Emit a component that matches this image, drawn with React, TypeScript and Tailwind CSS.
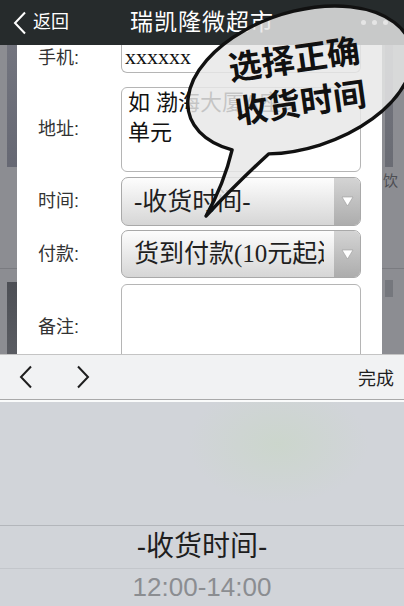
// Order form with a "choose the delivery time" callout over it

const UI = "font-['Liberation_Sans','Noto_Sans_CJK_SC',sans-serif]";
const VALUE = "font-['Liberation_Serif','Noto_Sans_CJK_SC',serif]";

function Chevron({ dir, className }: { dir: "left" | "right"; className?: string }) {
  return (
    <svg width="14" height="24" viewBox="0 0 14 24" className={className}>
      <polyline
        points={dir === "left" ? "12,1.5 2,12 12,22.5" : "2,1.5 12,12 2,22.5"}
        fill="none"
        stroke="currentColor"
        strokeWidth="2"
        strokeLinejoin="miter"
      />
    </svg>
  );
}

function SelectBox({ value }: { value: string }) {
  return (
    <div className="flex h-full rounded-[7px] border border-[#a9a9a9] bg-gradient-to-b from-[#fdfdfd] to-[#d6d6d6] overflow-hidden">
      <div className={`flex-1 min-w-0 flex items-center pl-[12px] pr-[10px] text-[25px] text-[#1f1f1f] ${VALUE}`}>
        <span className="block overflow-hidden whitespace-nowrap">{value}</span>
      </div>
      <div className="w-[26px] flex items-center justify-center bg-gradient-to-b from-[#d4d4d4] to-[#adadad]">
        <svg width="13" height="11" viewBox="0 0 13 11">
          <polygon points="1,1 12,1 6.5,10" fill="#fff" stroke="#9a9a9a" strokeWidth="0.6" />
        </svg>
      </div>
    </div>
  );
}

function Label({ children }: { children: string }) {
  return <div className="flex items-center pb-[3px] text-[18px] text-[#333]">{children}</div>;
}

export default function App() {
  return (
    <div className={`relative w-[404px] h-[606px] overflow-hidden flex flex-col bg-[#8c8d92] ${UI}`}>
      {/* top bar */}
      <header className="h-[45px] grid grid-cols-[1fr_auto_1fr] items-center bg-[#262b2c] text-white">
        <div className="flex items-center pl-[13px] gap-[6px]">
          <Chevron dir="left" className="text-white" />
          <span className="text-[18px]">返回</span>
        </div>
        <div className="text-[23px] tracking-[1px]">瑞凯隆微超市</div>
        <div className="flex justify-end items-center gap-[6px] pr-[16px]">
          <span className="w-[5px] h-[5px] rounded-full bg-[#d8d8d8]" />
          <span className="w-[5px] h-[5px] rounded-full bg-[#d8d8d8]" />
          <span className="w-[5px] h-[5px] rounded-full bg-[#d8d8d8]" />
        </div>
      </header>

      {/* page behind + modal form */}
      <div className="h-[309px] flex">
        <div className="w-[17px] flex flex-col">
          <div className="h-[223px] flex">
            <div className="w-[7px]" />
            <div className="w-[10px] flex flex-col">
              <div className="h-[122px] bg-gradient-to-b from-[#73757f] to-[#666873]" />
            </div>
          </div>
          <div className="flex-1 flex border-t border-[#7a7b80]">
            <div className="w-[7px]" />
            <div className="w-[10px] flex flex-col">
              <div className="h-[13px]" />
              <div className="flex-1 bg-gradient-to-b from-[#4d4f55] to-[#5a5c62]" />
            </div>
          </div>
        </div>

        <div className="w-[365px] bg-white overflow-hidden pl-[21px] grid grid-cols-[83px_240px] content-start">
          <Label>手机:</Label>
          <div className={`h-[28px] flex items-center pl-[3px] pb-[4px] border border-t-0 border-[#b5b5b5] rounded-b-[6px] text-[22px] text-[#111] ${VALUE}`}>
            xxxxxx
          </div>

          <div className="mt-[12px] flex items-center text-[18px] text-[#333]">地址:</div>
          <div className="mt-[12px] h-[85px] border border-[#b5b5b5] rounded-[6px] px-[6px] text-[22px] leading-[30px] text-[#111]">
            <div>如 渤海大厦A座3</div>
            <div>单元</div>
          </div>

          <div className="mt-[5px] flex items-center text-[18px] text-[#333]">时间:</div>
          <div className="mt-[5px] h-[49px]">
            <SelectBox value="-收货时间-" />
          </div>

          <div className="mt-[4px] flex items-center text-[18px] text-[#333]">付款:</div>
          <div className="mt-[4px] h-[48px]">
            <SelectBox value="货到付款(10元起送)" />
          </div>

          <div className="mt-[6px] flex items-center pb-[4px] text-[18px] text-[#333]">备注:</div>
          <div className="mt-[6px] h-[90px] border border-[#b5b5b5] rounded-[6px]" />
        </div>

        <div className="flex-1 flex flex-col">
          <div className="h-[223px] flex flex-col">
            <div className="h-[122px] flex">
              <div className="w-[3px]" />
              <div className="w-[8px] bg-gradient-to-b from-[#74767e] to-[#6a6c74]" />
            </div>
            <div className="pt-[5px] pl-[1px] text-[15px] leading-[18px] text-[#4d4e52]">饮</div>
          </div>
          <div className="flex-1 flex border-t border-[#7a7b80]">
            <div className="w-[3px]" />
            <div className="w-[8px] flex flex-col">
              <div className="h-[11px]" />
              <div className="h-[17px] bg-[#75777d]" />
            </div>
          </div>
        </div>
      </div>

      {/* keyboard toolbar */}
      <div className="h-[46px] flex items-center border-t border-b border-t-[#c4c4c4] border-b-[#a9a9a9] bg-[#f1f2f3] text-[#1e1e1e]">
        <Chevron dir="left" className="ml-[19px]" />
        <Chevron dir="right" className="ml-[43px]" />
        <span className="ml-auto mr-[10px] pt-[4px] text-[18px]">完成</span>
      </div>

      {/* picker wheel */}
      <div className="flex-1 flex flex-col border-t-2 border-[#fafbfb] bg-[#d1d4d9] bg-[radial-gradient(ellipse_90px_60px_at_278px_42px,rgba(203,214,203,0.9),rgba(209,212,217,0))]">
        <div className="h-[123px]" />
        <div className="h-[43px] flex items-center justify-center border-t border-[#b3b6bb] text-[28px] text-[#1e1e1e]">
          -收货时间-
        </div>
        <div className="flex-1 flex justify-center border-t border-[#c3c6cb] pt-[1px] text-[26px] leading-[34px] text-[#8b8d91]">
          12:00-14:00
        </div>
      </div>

      {/* callout bubble */}
      <svg className="absolute inset-0 pointer-events-none" width="404" height="606" viewBox="0 0 404 606">
        <path
          d="M 232.1 149.9 A 116 68 -18 1 1 268.6 153.9 Q 238 182 206 216 Q 224 184 232.1 149.9 Z"
          fill="#e7e7e7"
          fillOpacity="0.84"
          stroke="#111"
          strokeWidth="3.4"
          strokeLinejoin="round"
        />
      </svg>
      <div className="absolute left-[224px] top-[35px] w-[146px] rotate-[-8deg] text-center text-[33px] leading-[44px] font-bold text-[#111] font-['Noto_Sans_CJK_SC',sans-serif]">
        <div>选择正确</div>
        <div>收货时间</div>
      </div>
    </div>
  );
}
